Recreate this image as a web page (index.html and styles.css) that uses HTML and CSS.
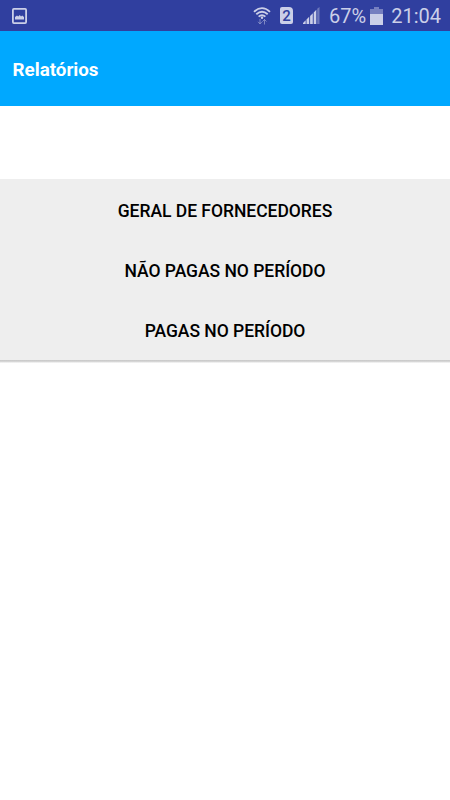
FILE: index.html
```html
<!DOCTYPE html>
<html lang="pt-BR">
<head>
    <meta charset="UTF-8">
    <meta name="viewport" content="width=device-width, initial-scale=1.0">
    <title>Relatórios</title>
    <link rel="stylesheet" href="styles.css">
</head>
<body>

<div class="status-bar">
    <svg class="icone-imagem" width="15" height="16" viewBox="0 0 15 16">
        <rect x="0.9" y="0.9" width="13.2" height="14.2" rx="1" fill="none" stroke="currentColor" stroke-width="1.8"/>
        <path d="M3 11.500V9l2-1.500 1.200 1L7.800 7l1.200 1.500 1.200-1L12 9v2.500z" fill="currentColor"/>
    </svg>
    <div class="status-direita">
        <svg class="icone-wifi" width="18" height="18" viewBox="0 0 18 18">
            <path d="M1 4.800Q9-2.500 17 4.800M3.300 7.300q5.700-5 11.400 0M5.600 9.700q3.400-3 6.800 0" fill="none" stroke="currentColor" stroke-width="1.8"/>
            <circle cx="9" cy="10.800" r="1.200" fill="currentColor"/>
            <path d="M7 12v5M5 14.800l2 2 2-2M11.500 17.500v-5M9.500 14.500l2-2 2 2" fill="none" stroke="currentColor" opacity=".5"/>
        </svg>
        <span class="sim">2</span>
        <svg class="icone-sinal" width="17" height="17" viewBox="0 0 17 17">
            <path d="M0 17v-1l2.700-2.700V17zM3.500 17v-4.500L6.200 9.800V17zM7.100 17V9l2.700-2.700V17zM10.700 17V5.400l2.600-2.600V17z" fill="currentColor"/>
            <path d="M14.200 17V1.800L16.500 0v17z" fill="currentColor" opacity=".4"/>
        </svg>
        <span class="bateria-texto">67%</span>
        <svg class="icone-bateria" width="13" height="18" viewBox="0 0 13 18">
            <path d="M4 0h5v2h4v5H0V2h4z" fill="currentColor" opacity=".45"/>
            <path d="M0 7h13v11H0z" fill="currentColor"/>
        </svg>
        <span class="hora">21:04</span>
    </div>
</div>

<header class="topo">
    <h1>Relatórios</h1>
</header>

<div class="menu">
    <button class="btn">Geral de Fornecedores</button>
    <button class="btn">Não pagas no período</button>
    <button class="btn">Pagas no período</button>
</div>
<div class="sombra"></div>

</body>
</html>
```

FILE: styles.css
```css
body {
    margin: 0;
    background-color: #fff;
    font-family: Roboto, sans-serif;
}
.status-bar {
    display: flex;
    align-items: center;
    justify-content: space-between;
    height: 31px;
    padding: 0 9px 0 12px;
    background-color: #303f9f;
    color: #cbcfe8;
}
.status-direita {
    display: flex;
    align-items: center;
    font-size: 20px;
}
.sim {
    width: 13px;
    height: 17px;
    margin: 0 10px 0 9px;
    border-radius: 2px 4px 2px 2px;
    background-color: #cbcfe8;
    color: #303f9f;
    font-size: 15px;
    font-weight: 500;
    line-height: 18px;
    text-align: center;
}
.bateria-texto {
    margin: 0 4px 0 9px;
}
.hora {
    margin-left: 8px;
}
.topo {
    display: flex;
    align-items: center;
    height: 73px;
    padding: 2px 0 0 12.5px;
    background-color: #00a8ff;
    color: #fff;
}
h1 {
    margin: 0;
    font-size: 18.8px;
    font-weight: 700;
}
.menu {
    display: flex;
    flex-direction: column;
    margin-top: 73px;
    padding-top: 1px;
    background-color: #eee;
}
.btn {
    height: 60px;
    padding: 1px 0 0;
    border: none;
    background: none;
    color: #000;
    font-family: inherit;
    font-size: 17.5px;
    font-weight: 500;
    letter-spacing: -0.03px;
    text-transform: uppercase;
}
.sombra {
    height: 3px;
    background: linear-gradient(#c6c6c6, #d6d6d6 50%, #fbfbfb);
}
```
